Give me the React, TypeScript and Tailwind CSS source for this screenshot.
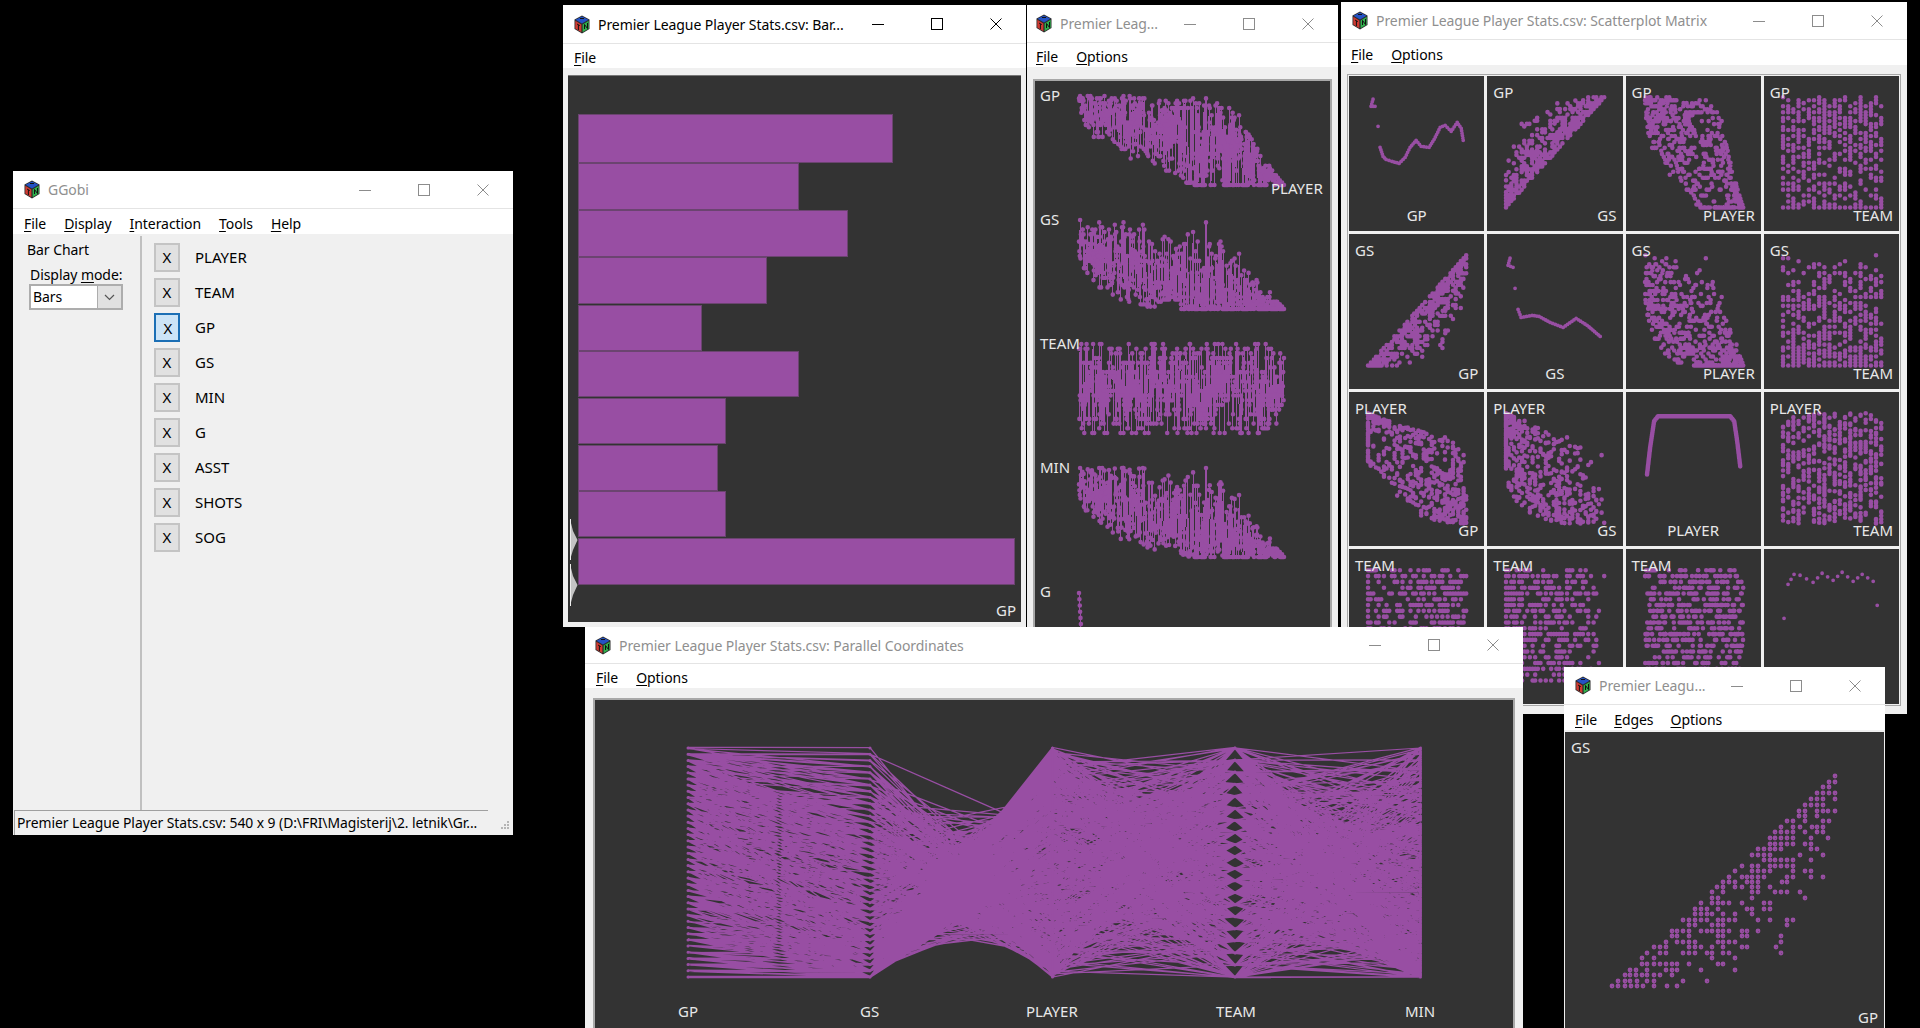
import React from "react";

type Row = { gp: number; gs: number; player: number; team: number; min: number; g: number };
type Key = "gp" | "gs" | "player" | "team" | "min" | "g";

const PURPLE = "#984ea3";

function makeRng(seed: number) {
  let s = seed;
  return () => {
    s = (s + 0x6d2b79f5) | 0;
    let t = Math.imul(s ^ (s >>> 15), 1 | s);
    t = (t + Math.imul(t ^ (t >>> 7), 61 | t)) ^ t;
    return ((t ^ (t >>> 14)) >>> 0) / 4294967296;
  };
}

function interp(pts: number[][], x: number) {
  for (let i = 1; i < pts.length; i++) {
    if (x <= pts[i][0]) {
      const [x0, y0] = pts[i - 1];
      const [x1, y1] = pts[i];
      return y0 + ((y1 - y0) * (x - x0)) / Math.max(x1 - x0, 0.0001);
    }
  }
  return pts[pts.length - 1][1];
}

const hiGP = [[0, 1], [0.68, 1], [0.79, 0.77], [0.9, 0.32], [1, 0]];
const loGP = [[0, 0.77], [0.08, 0.47], [0.26, 0.26], [0.49, 0.05], [0.59, 0], [1, 0]];
const floorGS = [[0, 0], [0.29, 0], [0.43, 0.03], [0.55, 0.08], [0.75, 0.16], [0.87, 0.43], [0.95, 0.52], [0.97, 0.71], [1, 0.84]];
const loGS = [[0, 0.62], [0.03, 0.42], [0.1, 0.25], [0.2, 0.12], [0.3, 0.05], [0.42, 0], [1, 0]];

function buildRows() {
  const r = makeRng(20190);
  const rows: Row[] = [];
  for (let i = 0; i < 540; i++) {
    const t = i / 539;
    const lo = interp(loGP, t);
    const hi = interp(hiGP, t);
    let gpRaw = lo + (hi - lo) * Math.pow(r(), 0.7);
    if (t > 0.52 && r() < 0.22) gpRaw = lo;
    const gp = Math.round(gpRaw * 37) / 37;
    const h = Math.min(gp, Math.max(interp(floorGS, gp), interp(loGS, t)));
    let gsRaw = h + (gp - h) * Math.pow(r(), 0.8);
    if (r() < 0.18) gsRaw = h;
    const gs = Math.round(gsRaw * 37) / 37;
    const team = Math.floor(r() * 20) / 19;
    const min = Math.min(1, Math.max(0, 0.25 * gp + 0.75 * gs + (r() - 0.5) * 0.1 * gp) * 1.06);
    const g = i < 6 ? 1 - i * 0.07 : Math.pow(r(), 3.5) * gp * 0.55;
    rows.push({ gp, gs, player: t, team, min, g });
  }
  rows[3].gp = 1;
  rows[3].gs = 1;
  rows[3].min = 1;
  return rows;
}

const rows = buildRows();

// GS against GP lattice as read off the big scatterplot: [y, ...x]
const lattice: number[][] = [
  [382, 885],
  [400, 867, 885],
  [415, 848, 867],
  [433, 830, 848, 867, 885],
  [450, 813, 830, 848, 885],
  [467, 795, 813, 830, 848],
  [485, 778, 795, 830, 848, 865, 885],
  [500, 778, 795, 830],
  [517, 742, 760, 795, 850, 866],
  [534, 723, 760, 780, 815, 830, 848],
  [550, 705, 723, 742, 760, 795, 830, 848],
  [567, 690, 705, 723, 742, 760, 813, 865],
  [585, 690, 705, 723, 742, 760, 795, 813],
  [600, 655, 672, 690, 705, 723, 813, 830],
  [617, 637, 655, 672, 690, 780, 848],
  [633, 672, 690, 705, 723, 742, 760, 813],
  [650, 605, 637, 655, 690, 705, 723, 742, 760],
  [667, 585, 637, 655, 672, 690, 760, 795, 813],
  [683, 567, 605, 620, 637, 655, 672, 742, 760, 813, 848],
  [700, 550, 567, 585, 620, 637, 655, 725, 742],
  [715, 530, 550, 585, 605, 637, 655, 690],
  [728, 517, 550, 637, 655, 705, 723, 742, 780],
  [746, 517, 535, 637, 795],
  [762, 484, 517, 535, 550, 567, 605, 672, 690],
  [780, 465, 484, 500, 535, 620, 637, 672, 690],
  [796, 465, 484, 500, 517, 550, 585, 637],
  [812, 430, 447, 465, 484, 500, 535, 550, 567, 585, 655, 690, 742, 760],
  [828, 447, 465, 517, 535, 550, 742],
  [845, 395, 412, 430, 447, 484, 500, 517, 535, 550, 567, 605, 620, 655],
  [862, 395, 412, 447, 535, 550, 605, 620, 723],
  [878, 378, 412, 430, 447, 465, 535, 550, 567, 585, 723],
  [895, 342, 360, 378, 447, 465, 484, 517, 550, 605, 620, 708],
  [912, 322, 360, 378, 430, 447, 465, 500, 517, 550, 567, 723],
  [928, 305, 342, 517, 585],
  [945, 305, 322, 342, 360, 378, 395, 412, 447, 535, 550],
  [962, 270, 287, 322, 378, 395, 412, 484, 585],
  [978, 255, 270, 287, 305, 322, 342, 360, 395],
  [995, 235, 255, 270, 290, 322, 342, 430, 500],
  [1012, 215, 235, 255, 272, 290, 308, 342, 380, 412],
];

const latticePts = lattice.flatMap(([y, ...xs]) => xs.map((x) => [x, y]));

function dotPath(pts: number[][], rad: number) {
  return pts
    .map(([x, y]) => `M${(x - rad).toFixed(1)} ${y.toFixed(1)}a${rad} ${rad} 0 1 0 ${rad * 2} 0a${rad} ${rad} 0 1 0 ${-rad * 2} 0`)
    .join("");
}

function Logo() {
  return (
    <svg width="16" height="19" viewBox="0 0 16 19" className="shrink-0">
      <polygon points="8,0.5 15.5,4.5 15.5,14 8,18.5 0.5,14 0.5,4.5" fill="#2b2b2b" />
      <polygon points="8,1.5 14.5,4.8 8,8.5 1.5,4.8" fill="#2452c4" />
      <polygon points="1.3,5.8 7.4,9.4 7.4,17.3 1.3,13.6" fill="#cf3a32" />
      <polygon points="8.6,9.4 14.7,5.8 14.7,13.6 8.6,17.3" fill="#2fb04c" />
      <path d="M6 3.5h4M3 9l2.8 1.6M4.4 10v5M10.5 14V9.5l3 4V8" stroke="#111" strokeWidth="1" fill="none" />
    </svg>
  );
}

function Controls({ active }: { active: boolean }) {
  const c = active ? "#000000" : "#8c8c8c";
  return (
    <div className="ml-auto flex h-full shrink-0 pr-px">
      <div className="flex w-[58.5px] items-center justify-center">
        <svg width="12" height="12" viewBox="0 0 12 12"><path d="M0 6.5h12" stroke={c} /></svg>
      </div>
      <div className="flex w-[58.5px] items-center justify-center">
        <svg width="12" height="12" viewBox="0 0 12 12"><rect x="0.5" y="0.5" width="11" height="11" fill="none" stroke={c} /></svg>
      </div>
      <div className="flex w-[59px] items-center justify-center">
        <svg width="12" height="12" viewBox="0 0 12 12"><path d="M0.5 0.5l11 11M11.5 0.5l-11 11" stroke={c} /></svg>
      </div>
    </div>
  );
}

function Menu({ items, className }: { items: string[]; className: string }) {
  return (
    <div className={`flex shrink-0 items-center border-b-2 border-[#f0f0f0] bg-white pt-[3px] text-black ${className}`}>
      {items.map((m) => (
        <span key={m}>
          <span className="underline underline-offset-2">{m[0]}</span>
          {m.slice(1)}
        </span>
      ))}
    </div>
  );
}

function Win({
  pos,
  title,
  active = false,
  menus,
  titleClass,
  menuClass,
  children,
}: {
  pos: string;
  title: string;
  active?: boolean;
  menus: string[];
  titleClass: string;
  menuClass: string;
  children: React.ReactNode;
}) {
  return (
    <div className={`absolute flex flex-col overflow-hidden bg-[#f0f0f0] ${pos}`}>
      <div className={`flex shrink-0 items-center border-b border-[#e4e4e4] bg-white ${titleClass}`}>
        <Logo />
        <span className={`ml-2 whitespace-nowrap ${active ? "text-black" : "text-[#8f8f8f]"}`}>{title}</span>
        <Controls active={active} />
      </div>
      <Menu items={menus} className={menuClass} />
      {children}
    </div>
  );
}

function Label({ className, children }: { className: string; children: string }) {
  return <span className={`absolute whitespace-nowrap text-[15px] leading-5 tracking-normal text-[#e8e8e8] ${className}`}>{children}</span>;
}

const vars = ["GP", "GS", "PLAYER", "TEAM", "MIN"];
const keysOrder: Key[] = ["gp", "gs", "player", "team"];

// diagonal ASH curves, given in plot pixels inside the cell
const ashCurves: Record<string, number[][]> = {
  gp: [[24, 23], [22, 30], [26, 30], [29, 50], [31, 71], [34, 80], [37, 83], [43, 85], [50, 87], [56, 81], [61, 71], [67, 64], [72, 70], [80, 71], [85, 63], [91, 51], [96, 49], [102, 55], [108, 46], [112, 52], [114, 64]],
  gs: [[23, 24], [21, 31], [26, 33], [28, 54], [31, 75], [34, 83], [45, 81], [52, 82], [63, 88], [76, 93], [89, 84], [100, 91], [113, 102]],
  player: [[21, 82], [24, 56], [28, 29], [32, 24], [104, 24], [108, 29], [111, 49], [114, 74]],
  team: [[20, 69], [24, 35], [30, 25], [36, 26], [49, 33], [58, 24], [69, 31], [78, 23], [89, 32], [98, 25], [109, 32], [113, 56]],
};

function ashPoints(key: string) {
  const line = ashCurves[key];
  const out: number[][] = [];
  for (let i = 1; i < line.length; i++) {
    const [x0, y0] = line[i - 1];
    const [x1, y1] = line[i];
    const gap = Math.hypot(x1 - x0, y1 - y0);
    const spacing = key === "player" ? 1 : key === "team" ? 6 : 2.6;
    const n = key !== "player" && gap > 18 ? 1 : Math.max(1, Math.round(gap / spacing));
    for (let j = 0; j < n; j++) out.push([x0 + ((x1 - x0) * j) / n, y0 + ((y1 - y0) * j) / n]);
  }
  out.push(line[line.length - 1]);
  return out;
}

function cellPoints(rowKey: Key, colKey: Key) {
  if (rowKey === colKey) return ashPoints(rowKey);
  // the GP and GS pair uses the lattice read from the big plot
  if (rowKey === "gs" && colKey === "gp") {
    return latticePts.map(([x, y]) => [19 + ((x - 215) / 670) * 98, 131 - ((1012 - y) / 630) * 110]);
  }
  if (rowKey === "gp" && colKey === "gs") {
    return latticePts.map(([x, y]) => [19 + ((1012 - y) / 630) * 98, 131 - ((x - 215) / 670) * 110]);
  }
  return rows.map((d) => [19 + d[colKey] * 98, 131 - d[rowKey] * 110]);
}

function MatrixCell({ rowKey, colKey, rowName, colName }: { rowKey: Key; colKey: Key; rowName: string; colName: string }) {
  const diag = rowKey === colKey;
  const pts = cellPoints(rowKey, colKey);
  return (
    <div className="relative bg-[#333333]">
      <svg viewBox="0 0 135 154" className="absolute inset-0 h-full w-full">
        <path d={dotPath(pts, diag && rowKey !== "player" ? 1.9 : 2.3)} fill={PURPLE} />
      </svg>
      {!diag && <Label className="left-[6px] top-[6px]">{rowName}</Label>}
      {diag ? (
        <Label className="bottom-[6px] left-0 right-0 text-center">{colName}</Label>
      ) : (
        <Label className="bottom-[6px] right-[6px]">{colName}</Label>
      )}
    </div>
  );
}

function SeriesRow({ k, top }: { k: Key; top: number }) {
  const pts = rows.map((d) => [44 + d.player * 205, top + (1 - d[k]) * 89]);
  const line = "M" + pts.map(([x, y]) => `${x.toFixed(1)} ${y.toFixed(1)}`).join("L");
  return (
    <>
      <path d={line} stroke={PURPLE} strokeWidth="1" fill="none" shapeRendering="crispEdges" />
      <path d={dotPath(pts, 2.3)} fill={PURPLE} />
    </>
  );
}

function ParallelPlot() {
  const xs = [93, 275, 457.5, 640, 825.5];
  const keys: Key[] = ["gp", "gs", "player", "team", "min"];
  const yOf = (v: number) => 277 - v * 229;
  // small jitter keeps the lattice from beating into vertical bands
  const r = makeRng(77);
  const lines = rows
    .map((d) => "M" + keys.map((k, i) => `${xs[i]} ${(yOf(d[k]) + (r() - 0.5) * 1.4).toFixed(1)}`).join("L"))
    .join("");
  const dots: number[][] = [];
  rows.forEach((d) => keys.forEach((k, i) => dots.push([xs[i], yOf(d[k])])));
  return (
    <svg width="920" height="326" viewBox="0 0 920 326" className="absolute inset-0">
      <path d={lines} stroke={PURPLE} strokeWidth="1.25" fill="none" />
      <path d={dotPath(dots, 1.5)} fill={PURPLE} />
    </svg>
  );
}

const bars = [
  [38, 48, 892],
  [87, 46, 798],
  [134, 46, 847],
  [181, 46, 766],
  [229, 45, 701],
  [275, 45, 798],
  [322, 45, 725],
  [369, 45, 717],
  [415, 45, 725],
  [462, 46, 1014],
];

function BarPlot() {
  return (
    <svg width="453" height="547" viewBox="0 0 453 547" className="absolute inset-0">
      {bars.map(([y, h, right]) => (
        <rect key={y} x="10.5" y={y + 0.5} width={right - 578} height={h} fill={PURPLE} stroke="#6b4470" />
      ))}
      <polygon points="2,443 5,455 9.5,464 5,474 2,484" fill="#c4c4c4" />
      <polygon points="2,488 5,500 9.5,509 5,519 2,530" fill="#c4c4c4" />
      <path d="M2.5 443v41M2.5 488v42" stroke="#eeeeee" />
    </svg>
  );
}

function SmallScatter() {
  const pts = latticePts.map(([x, y]) => [Math.round(x / 3 - 25), Math.round(y / 3 - 83)]);
  return (
    <svg width="319" height="295" viewBox="0 0 319 295" className="absolute inset-0">
      <path d={dotPath(pts, 2.4)} fill={PURPLE} />
      <path d={pts.map(([x, y]) => `M${x} ${y}h1v1h-1z`).join("")} fill="#74487b" />
    </svg>
  );
}

const varList = ["PLAYER", "TEAM", "GP", "GS", "MIN", "G", "ASST", "SHOTS", "SOG"];

export default function App() {
  return (
    <div className="relative h-[1028px] w-[1920px] overflow-hidden bg-black font-['Noto_Sans',sans-serif] text-[14px] tracking-[-0.06px]">
      {/* main control window */}
      <Win
        pos="left-[13px] top-[171px] h-[664px] w-[500px]"
        title="GGobi"
        menus={["File", "Display", "Interaction", "Tools", "Help"]}
        titleClass="h-[38px] pl-[11px]"
        menuClass="h-[27px] gap-[18px] pl-[11px]"
      >
        <div className="flex min-h-0 flex-1 text-black">
          <div className="w-[129px] shrink-0 border-r-2 border-[#c0c0c0] pl-[14px] pt-[4px]">
            <div className="leading-5">Bar Chart</div>
            <div className="ml-[3px] mt-[5px] leading-[19px]">
              Display <span className="underline underline-offset-2">m</span>ode:
            </div>
            <div className="ml-[2px] flex h-[26px] w-[94px] border-2 border-[#adadad] bg-white">
              <span className="flex-1 pl-[2px] leading-[22px]">Bars</span>
              <div className="flex w-[24px] items-center justify-center border-l border-[#adadad] bg-[#e1e1e1]">
                <svg width="11" height="7" viewBox="0 0 11 7"><path d="M1 1l4.5 4.5L10 1" stroke="#555" strokeWidth="1.2" fill="none" /></svg>
              </div>
            </div>
          </div>
          <div className="flex flex-1 flex-col gap-[6px] pl-[12px] pt-[7px]">
            {varList.map((v) => (
              <div key={v} className="flex h-[29px] items-center text-[15px] tracking-normal">
                <div
                  className={`flex h-[29px] w-[26px] items-center justify-center border-2 ${
                    v === "GP" ? "border-[#1c6fb5] bg-[#cce4f7] pl-[2px] pt-[2px]" : "border-[#c4c4c4] bg-[#e1e1e1]"
                  }`}
                >
                  X
                </div>
                <span className="ml-[15px]">{v}</span>
              </div>
            ))}
          </div>
        </div>
        <div className="flex h-[25px] shrink-0 items-center pl-px text-black">
          <div className="h-full w-[474px] overflow-hidden whitespace-nowrap border-l border-t border-[#a0a0a0] bg-[#f0f0f0] pl-[2px] text-[13.9px] leading-[23px]">
            Premier League Player Stats.csv: 540 x 9 (D:\FRI\Magisterij\2. letnik\Gr...
          </div>
          <svg width="10" height="10" viewBox="0 0 10 10" className="ml-[12px] mt-[5px]">
            <path d="M7 1h2v2H7zM4 4h2v2H4zM7 4h2v2H7zM1 7h2v2H1zM4 7h2v2H4zM7 7h2v2H7z" fill="#b5b5b5" />
          </svg>
        </div>
      </Win>

      {/* bar chart */}
      <Win
        pos="left-[563px] top-[5px] h-[622px] w-[463px]"
        title="Premier League Player Stats.csv: Bar..."
        active
        menus={["File"]}
        titleClass="h-[39px] pl-[11px]"
        menuClass="h-[26px] pl-[11px]"
      >
        <div className="flex min-h-0 flex-1 px-[5px] pb-[5px] pt-[5px]">
          <div className="relative flex-1 border-t border-[#777] bg-[#333333]">
            <BarPlot />
            <Label className="bottom-[2px] right-[5px]">GP</Label>
          </div>
        </div>
      </Win>

      {/* time series column */}
      <Win
        pos="left-[1027px] top-[5px] h-[622px] w-[311px]"
        title="Premier Leag..."
        menus={["File", "Options"]}
        titleClass="h-[38px] pl-[9px]"
        menuClass="h-[26px] gap-[18px] pl-[9px]"
      >
        <div className="flex min-h-0 flex-1 px-[6px] pt-[10px]">
          <div className="relative flex-1 overflow-hidden border-2 border-b-0 border-[#a8a8a8] bg-[#333333]">
            <svg width="296" height="560" viewBox="0 0 296 560" className="absolute inset-0">
              <SeriesRow k="gp" top={15} />
              <SeriesRow k="gs" top={139} />
              <SeriesRow k="team" top={263} />
              <SeriesRow k="min" top={387} />
              <SeriesRow k="g" top={512} />
            </svg>
            <Label className="left-[5px] top-[4px]">GP</Label>
            <Label className="left-[236px] top-[97px]">PLAYER</Label>
            <Label className="left-[5px] top-[128px]">GS</Label>
            <Label className="left-[5px] top-[252px]">TEAM</Label>
            <Label className="left-[5px] top-[376px]">MIN</Label>
            <Label className="left-[5px] top-[500px]">G</Label>
          </div>
        </div>
      </Win>

      {/* scatterplot matrix */}
      <Win
        pos="left-[1341px] top-[2px] h-[712px] w-[566px]"
        title="Premier League Player Stats.csv: Scatterplot Matrix"
        menus={["File", "Options"]}
        titleClass="h-[38px] pl-[11px]"
        menuClass="h-[27px] gap-[18px] pl-[10px]"
      >
        <div className="flex min-h-0 flex-1 pb-[8px] pl-[6px] pr-[6px] pt-[7px]">
          <div className="grid flex-1 grid-cols-4 grid-rows-4 gap-[3px] border border-[#a8a8a8] bg-[#f0f0f0] p-px">
            {keysOrder.map((rk, ri) =>
              keysOrder.map((ck, ci) => (
                <MatrixCell key={rk + ck} rowKey={rk} colKey={ck} rowName={vars[ri]} colName={vars[ci]} />
              )),
            )}
          </div>
        </div>
      </Win>

      {/* parallel coordinates */}
      <Win
        pos="left-[585px] top-[627px] h-[401px] w-[938px]"
        title="Premier League Player Stats.csv: Parallel Coordinates"
        menus={["File", "Options"]}
        titleClass="h-[37px] pl-[10px]"
        menuClass="h-[26px] gap-[18px] pl-[11px]"
      >
        <div className="flex min-h-0 flex-1 px-[8px] pt-[8px]">
          <div className="relative flex-1 border-2 border-b-0 border-[#a8a8a8] bg-[#333333]">
            <ParallelPlot />
            <Label className="left-[83px] top-[301px]">GP</Label>
            <Label className="left-[265px] top-[301px]">GS</Label>
            <Label className="left-[431px] top-[301px]">PLAYER</Label>
            <Label className="left-[621px] top-[301px]">TEAM</Label>
            <Label className="left-[810px] top-[301px]">MIN</Label>
          </div>
        </div>
      </Win>

      {/* GP vs GS scatterplot */}
      <Win
        pos="left-[1564px] top-[667px] h-[361px] w-[321px]"
        title="Premier Leagu..."
        menus={["File", "Edges", "Options"]}
        titleClass="h-[38px] pl-[11px]"
        menuClass="h-[27px] gap-[17px] pl-[11px]"
      >
        <div className="flex min-h-0 flex-1 px-px">
          <div className="relative flex-1 bg-[#333333]">
            <SmallScatter />
            <Label className="left-[6px] top-[5px]">GS</Label>
            <Label className="bottom-[1px] right-[6px]">GP</Label>
          </div>
        </div>
      </Win>
    </div>
  );
}
